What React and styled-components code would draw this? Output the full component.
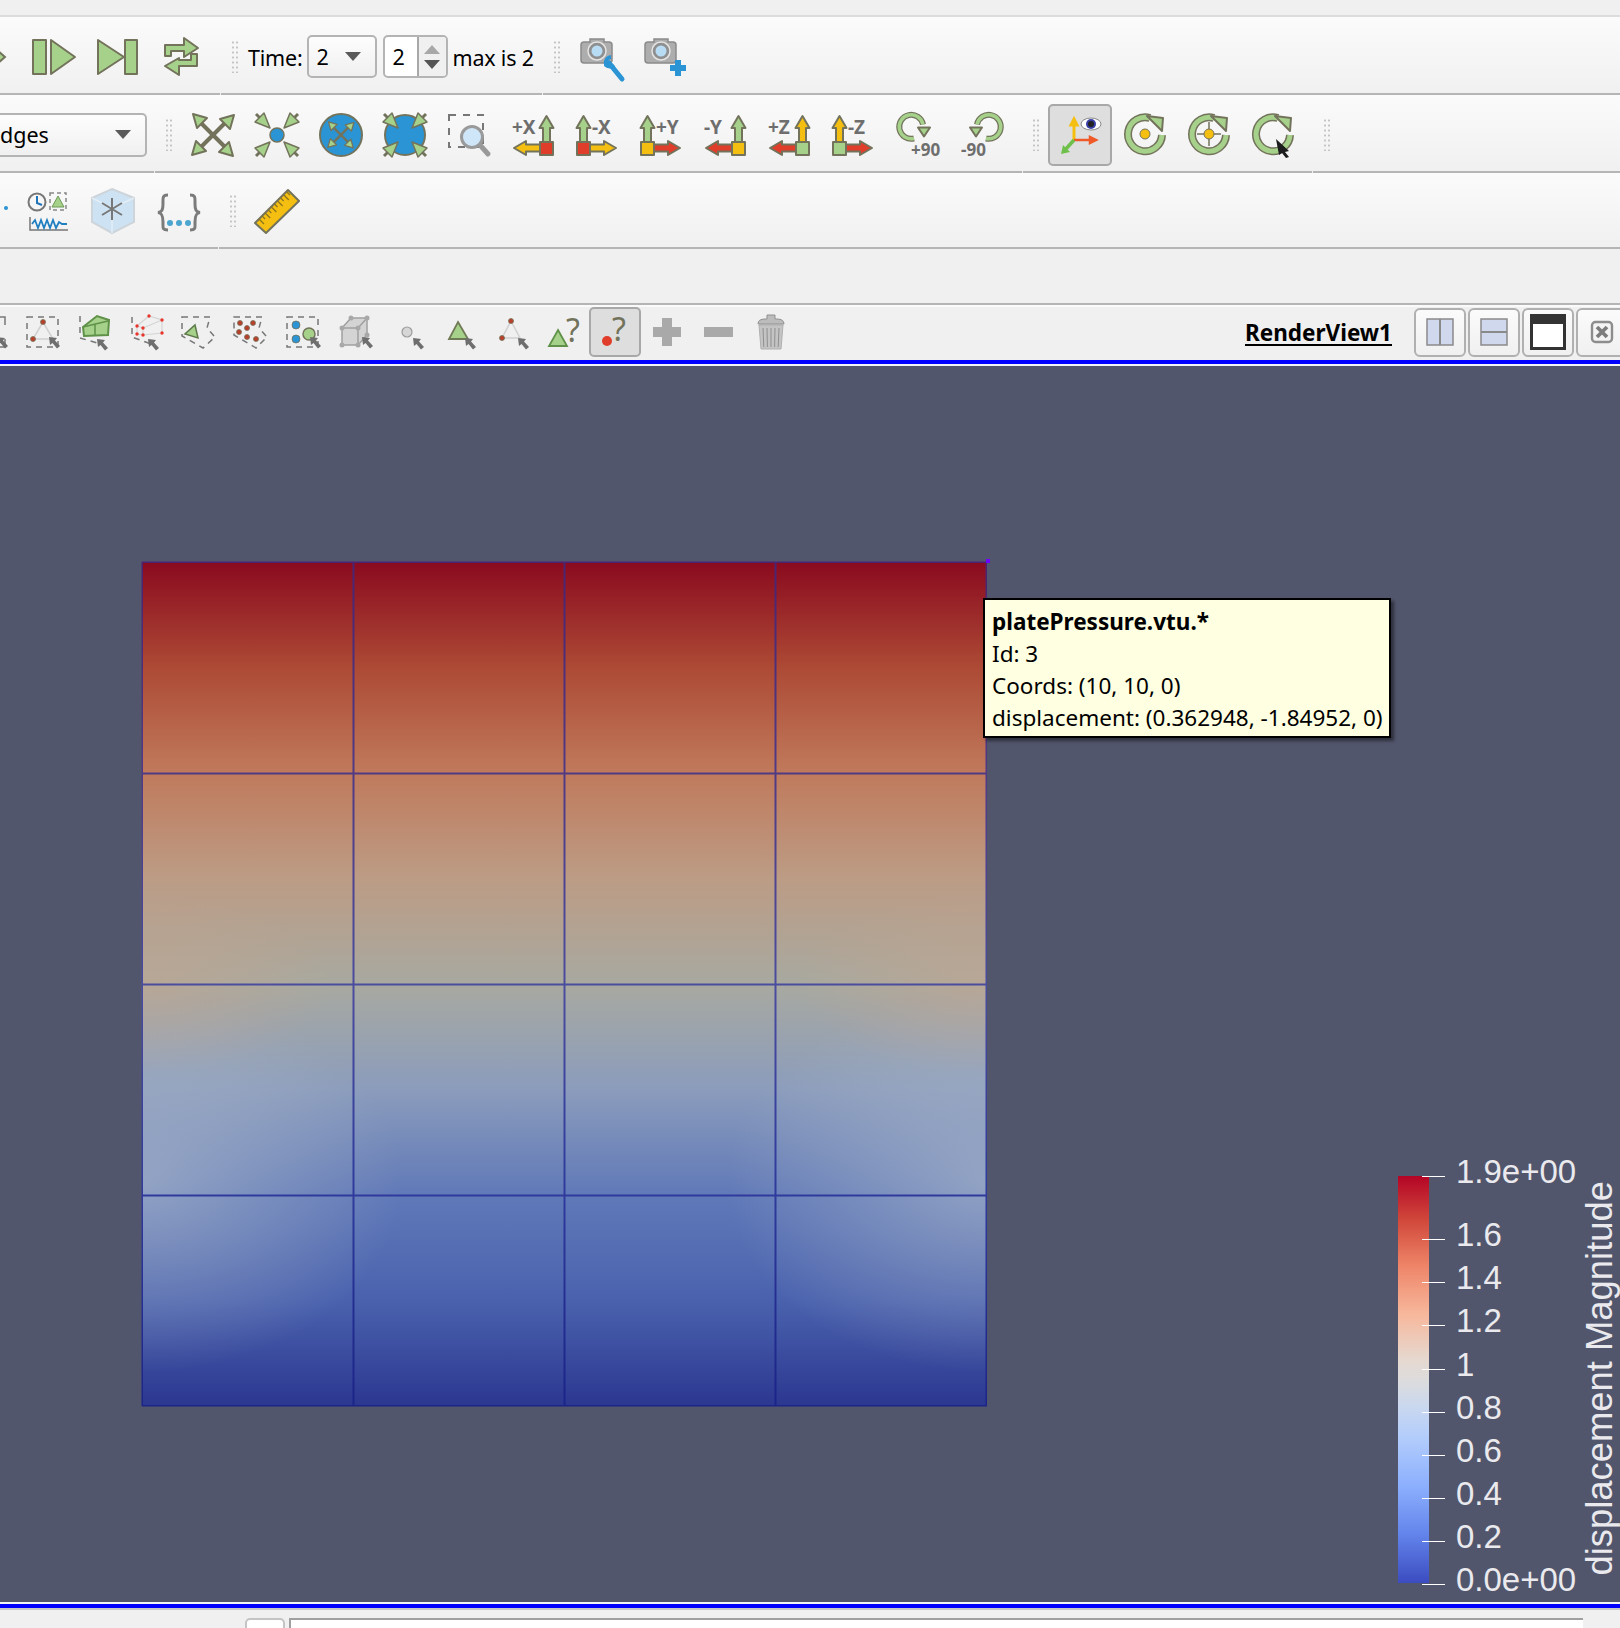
import React from 'react';
import styled, { createGlobalStyle } from 'styled-components';

const O = '#73735c';
const G = '#a6d18a';
const B = '#2a94d4';
const R = '#e03d2b';
const Y = '#f5bf11';
const S = '#6e6e6e';
const UI_FONT = '"Noto Sans", "Open Sans", sans-serif';

const GlobalStyle = createGlobalStyle`
  html, body { margin: 0; padding: 0; background: #f0f0f0; }
  body { font-family: ${UI_FONT}; color: #000; }
`;

const Page = styled.div`
  width: 1620px;
  height: 1628px;
  overflow: hidden;
  display: flex;
  flex-direction: column;
  background: #f0f0f0;
`;

const TopStrip = styled.div`
  height: 15px;
  flex: none;
  border-bottom: 2px solid #dcdcdc;
`;

const ToolRow = styled.div`
  height: ${(p) => p.$h}px;
  flex: none;
  display: flex;
  gap: 1px;
  background: linear-gradient(#fbfbfb, #f0f0f0);
`;

const Segment = styled.div`
  flex: ${(p) => (p.$w ? `0 0 ${p.$w}px` : '1 1 auto')};
  display: flex;
  align-items: center;
  padding: ${(p) => p.$top || 0}px 0 0 ${(p) => p.$pad || 0}px;
  border-bottom: 2px solid #b5b5b5;
  box-sizing: border-box;
  min-width: 0;
`;

const Grip = styled.div`
  flex: none;
  width: 8px;
  height: 33px;
  margin-right: ${(p) => p.$gap || 8}px;
  background-image: radial-gradient(circle, #c4c4c4 1px, transparent 1.2px);
  background-size: 4px 5px;
`;

const IconButton = styled.div`
  flex: none;
  width: ${(p) => p.$w || 64}px;
  height: ${(p) => p.$h || 62}px;
  margin-left: ${(p) => p.$shift || 0}px;
  display: flex;
  align-items: center;
  justify-content: center;
  box-sizing: border-box;
  border-radius: 5px;
  border: 2px solid ${(p) => (p.$pressed ? '#a8a8a8' : 'transparent')};
  background: ${(p) => (p.$pressed ? '#dedede' : 'transparent')};
`;

const IconSvg = styled.svg`
  display: block;
  flex: none;
  overflow: visible;
  text {
    font-family: ${UI_FONT};
    font-weight: 700;
    fill: ${S};
  }
`;

const Caption = styled.span`
  flex: none;
  font-size: 21.5px;
  letter-spacing: -0.2px;
  line-height: 30px;
  padding-top: 3px;
  margin: ${(p) => p.$margin || 0};
`;

const Combo = styled.div`
  flex: none;
  box-sizing: border-box;
  width: ${(p) => p.$w}px;
  height: ${(p) => p.$h}px;
  margin-left: ${(p) => p.$left || 0}px;
  padding: 0 14px 0 ${(p) => p.$pad}px;
  display: flex;
  align-items: center;
  justify-content: space-between;
  border: 2px solid #b4b4b4;
  border-radius: 5px;
  background: linear-gradient(#fdfdfd, #f0f0f0);
  font-size: 21.5px;
`;

const ComboArrow = styled.span`
  width: 0;
  height: 0;
  border-left: 8px solid transparent;
  border-right: 8px solid transparent;
  border-top: 9px solid #5a5a5a;
`;

const Spin = styled.div`
  flex: none;
  box-sizing: border-box;
  width: 65px;
  height: 43px;
  margin-left: 6px;
  display: flex;
  border: 2px solid #b4b4b4;
  border-radius: 5px;
  background: #fff;
  font-size: 21.5px;
  overflow: hidden;
`;

const SpinValue = styled.div`
  flex: 1;
  padding-left: 8px;
  display: flex;
  align-items: center;
`;

const SpinArrows = styled.div`
  flex: 0 0 27px;
  background: #f0f0f0;
  border-left: 2px solid #a8a8a8;
  display: flex;
  flex-direction: column;
  align-items: center;
  justify-content: center;
  gap: 6px;
`;

const SpinArrow = styled.span`
  width: 0;
  height: 0;
  border-left: 8px solid transparent;
  border-right: 8px solid transparent;
  border-${(p) => (p.$up ? 'bottom' : 'top')}: 9px solid ${(p) => (p.$up ? '#a8a8a8' : '#555')};
`;

const BlankRow = styled.div`
  height: 54px;
  flex: none;
  border-bottom: 2px solid #b5b5b5;
`;

const SelectionBar = styled.div`
  width: 1628px;
  height: 55px;
  flex: none;
  box-sizing: border-box;
  border-top: 2px solid #fafafa;
  padding-bottom: 3px;
  display: flex;
  align-items: center;
  background: #f0f0f0;
`;

const ViewName = styled.span`
  margin-left: auto;
  margin-right: 22px;
  font-size: 22.5px;
  font-weight: 700;
  text-decoration: underline;
  text-decoration-thickness: 2px;
  text-underline-offset: 3px;
`;

const ViewButtons = styled.div`
  display: flex;
  gap: 2px;
`;

const ViewButton = styled.div`
  width: 52px;
  height: 49px;
  box-sizing: border-box;
  border: 2px solid #b0b0b0;
  border-radius: 6px;
  background: linear-gradient(#fbfbfb, #f0f0f0);
  display: flex;
  align-items: center;
  justify-content: center;
`;

const BlueLine = styled.div`
  height: 4px;
  flex: none;
  background: #0000ff;
`;

const WhiteLine = styled.div`
  height: 2px;
  flex: none;
  background: #f4f4f4;
`;

const Viewport = styled.div`
  position: relative;
  height: 1236px;
  flex: none;
  box-sizing: border-box;
  padding: 196px 0 0 142px;
  background: #52566c;
  overflow: hidden;
`;

const Tooltip = styled.div`
  position: absolute;
  left: 983px;
  top: 232px;
  width: 408px;
  height: 140px;
  box-sizing: border-box;
  padding: 6px 0 0 7px;
  border: 2px solid #000;
  background: #ffffe1;
  box-shadow: 3px 3px 3px rgba(0, 0, 0, 0.45);
  font-size: 22.5px;
  line-height: 32px;
  white-space: nowrap;
`;

const TooltipTitle = styled.div`
  font-weight: 700;
`;

const Legend = styled.div`
  position: absolute;
  left: 1398px;
  top: 810px;
  display: flex;
  align-items: flex-start;
  color: #eaeaee;
  font-family: "Liberation Sans", Arial, sans-serif;
`;

const ColorBar = styled.div`
  width: 31px;
  height: 407px;
  margin-right: -7px;
  background: linear-gradient(
    #b40426 0%,
    #d1493b 11%,
    #ee8468 22%,
    #f7b89c 34%,
    #e6d8cf 45%,
    #dddcdc 50%,
    #c9d7f0 57%,
    #b3cdfb 64%,
    #8db0fe 76%,
    #6384eb 88%,
    #3b4cc0 100%
  );
`;

const LegendScale = styled.div`
  position: relative;
  width: 158px;
  display: flex;
  flex-direction: column;
`;

const LegendRow = styled.div`
  height: 1px;
  margin-top: ${(p) => p.$gap}px;
  display: flex;
  align-items: center;
`;

const Tick = styled.span`
  flex: none;
  width: 23px;
  height: 1px;
  background: #fff;
`;

const TickLabel = styled.span`
  margin: -10px 0 0 11px;
  font-size: 33px;
  line-height: 33px;
  white-space: nowrap;
`;

const LegendTitle = styled.div`
  writing-mode: vertical-rl;
  transform: rotate(180deg);
  margin-top: 5px;
  font-size: 36.4px;
  line-height: 40px;
  white-space: nowrap;
`;

const StatusBar = styled.div`
  flex: 1;
  border-top: 2px solid #c8c8c8;
  display: flex;
  align-items: flex-start;
  gap: 4px;
  padding: 8px 0 0 245px;
`;

const StatusButton = styled.div`
  width: 40px;
  height: 30px;
  box-sizing: border-box;
  border: 2px solid #c4c4c4;
  border-radius: 5px;
  background: #fff;
`;

const StatusField = styled.div`
  width: 1294px;
  height: 30px;
  box-sizing: border-box;
  border-top: 2px solid #a0a0a0;
  border-left: 2px solid #a0a0a0;
  background: #fff;
`;

const Icon = ({ s = 48, w, children }) => (
  <IconSvg width={w || s} height={s} viewBox={`0 0 ${w || s} ${s}`}>
    {children}
  </IconSvg>
);

const lineProps = { stroke: O, strokeWidth: 2, strokeLinejoin: 'round' };
const QUARTERS = [0, 90, 180, 270];

const Play = () => (
  <Icon>
    <rect x="4" y="7" width="13" height="34" fill={G} {...lineProps} />
    <polygon points="22,7 46,24 22,41" fill={G} {...lineProps} />
  </Icon>
);

const NextFrame = () => (
  <Icon>
    <polygon points="5,7 31,24 5,41" fill={G} {...lineProps} />
    <rect x="32" y="7" width="12" height="34" fill={G} {...lineProps} />
  </Icon>
);

const Loop = () => (
  <Icon>
    <path d="M8 23V12H27V5L41 15L27 24V18H14V23Z" fill={G} {...lineProps} />
    <path d="M40 21V33H22V42L8 33L22 25V27H34V21Z" fill={G} {...lineProps} />
  </Icon>
);

const CameraBody = () => (
  <>
    <path d="M4 12Q4 9 7 9H13V6H27V9H32Q35 9 35 12V27Q35 30 32 30H7Q4 30 4 27Z" fill="#adadad" stroke="#8b8b8b" strokeWidth="1.5" />
    <circle cx="20" cy="18" r="9" fill="#8f8f8f" stroke="#e4e4e4" strokeWidth="1.5" />
    <circle cx="20" cy="18" r="5.5" fill="#b9dcf5" />
  </>
);

const CameraTool = () => (
  <Icon>
    <CameraBody />
    <path d="M32 30L45 46" stroke={B} strokeWidth="5" strokeLinecap="round" />
    <path d="M34 24A6 6 0 0 0 29 32A6 6 0 0 0 37 32" fill="none" stroke={B} strokeWidth="4" />
  </Icon>
);

const CameraPlus = () => (
  <Icon>
    <CameraBody />
    <path d="M37 27V43M29 35H45" stroke={B} strokeWidth="6" />
  </Icon>
);

const OutwardHead = () => (
  <>
    <path d="M24 24L10 10" stroke={O} strokeWidth="4" />
    <polygon points="4,3 18,7 8,17" fill={G} {...lineProps} />
  </>
);

const OutwardArrows = () =>
  QUARTERS.map((a) => (
    <g key={a} transform={`rotate(${a} 24 24)`}>
      <OutwardHead />
    </g>
  ));

const InwardHead = ({ tip = 17 }) => (
  <>
    <path d={`M${tip - 10} ${tip - 10}L3 3`} stroke={O} strokeWidth="3" />
    <polygon points={`${tip},${tip} ${tip - 15},${tip - 6} ${tip - 6},${tip - 15}`} fill={G} stroke={O} strokeWidth="1.5" strokeLinejoin="round" />
  </>
);

const InwardArrows = ({ tip }) =>
  QUARTERS.map((a) => (
    <g key={a} transform={`rotate(${a} 24 24)`}>
      <InwardHead tip={tip} />
    </g>
  ));

const ResetView = () => (
  <Icon>
    <OutwardArrows />
  </Icon>
);

const ZoomData = () => (
  <Icon>
    <InwardArrows tip={17} />
    <circle cx="24" cy="24" r="7" fill={B} stroke={O} strokeWidth="1.5" />
  </Icon>
);

const ZoomClosest = () => (
  <Icon>
    <circle cx="24" cy="24" r="21" fill={B} stroke={O} strokeWidth="2" />
    <g transform="translate(9 9) scale(.62)">
      <OutwardArrows />
    </g>
  </Icon>
);

const ZoomFit = () => (
  <Icon>
    <circle cx="24" cy="24" r="20" fill={B} stroke={O} strokeWidth="2" />
    <InwardArrows tip={17} />
  </Icon>
);

const ZoomBox = () => (
  <Icon>
    <rect x="4" y="4" width="34" height="32" fill="none" stroke="#777" strokeWidth="2" strokeDasharray="7 7" />
    <path d="M35 34L43 43" stroke="#999" strokeWidth="5" strokeLinecap="round" />
    <circle cx="27" cy="26" r="10.5" fill="#cfe6f8" stroke="#9a9a9a" strokeWidth="3" />
  </Icon>
);

const Arrow = ({ x, y, dir, fill }) => {
  // shaft base at x,y going dir, 26px long
  const rot = { up: 0, left: -90, right: 90 }[dir];
  return (
    <path
      transform={`translate(${x} ${y}) rotate(${rot})`}
      d="M-3.5 0V-14H-7L0 -26L7 -14H3.5V0Z"
      fill={fill}
      {...lineProps}
    />
  );
};

const AxisView = ({ label, side, square, up, across }) => {
  const right = side === 'right';
  const sx = right ? 31 : 4;
  const cx = sx + 6.5;
  return (
    <Icon>
      <Arrow x={cx} y={31} dir="up" fill={up} />
      <Arrow x={right ? sx : sx + 13} y={37} dir={right ? 'left' : 'right'} fill={across} />
      <rect x={sx} y="31" width="13" height="13" fill={square} {...lineProps} />
      <text x={right ? 3 : 19} y="23" fontSize="19">{label}</text>
    </Icon>
  );
};

const Quarter = ({ label, back }) => (
  <Icon>
    <g transform={back ? 'translate(50 -1.5) scale(-1 1)' : 'translate(0 -1.5)'}>
      <path d="M21 29A12 12 0 1 1 30 15" fill="none" stroke={O} strokeWidth="6" />
      <path d="M21 29A12 12 0 1 1 30 15" fill="none" stroke={G} strokeWidth="3.5" />
      <polygon points="25,18 37,18 31,27" fill={G} {...lineProps} />
    </g>
    <text x={back ? 4 : 18} y="45" fontSize="17">{label}</text>
  </Icon>
);

const AxesEye = () => (
  <Icon>
    <path d="M18 29V14H15L18 8L21 14H18" fill={Y} stroke={Y} strokeWidth="3" />
    <path d="M18 29H34V26L40 29L34 32V29" fill="#f05a28" stroke="#f05a28" strokeWidth="2.5" />
    <path d="M18 29L9 39" stroke="#6fc04b" strokeWidth="3.5" />
    <polygon points="5,43 7,34 14,41" fill="#6fc04b" />
    <ellipse cx="35" cy="13" rx="10" ry="6" fill="#fff" stroke="#8a8a8a" />
    <circle cx="35" cy="13" r="5" fill="#3a3fa8" />
    <circle cx="35" cy="13" r="3" fill="#222" />
  </Icon>
);

const Ring = ({ children }) => (
  <Icon>
    <g transform="translate(0 -1)">
      <path d="M42 25A17 17 0 1 1 30 8" fill="none" stroke={O} strokeWidth="8" />
      <path d="M42 25A17 17 0 1 1 30 8" fill="none" stroke={G} strokeWidth="5" />
      <polygon points="27,6 43,8 42,21" fill={G} {...lineProps} />
      {children}
    </g>
  </Icon>
);

const TimeInspector = () => (
  <Icon>
    <circle cx="13" cy="16" r="8.5" fill="#f6f6f6" stroke="#777" strokeWidth="2" />
    <path d="M13 10V17L18 19" fill="none" stroke="#2274b8" strokeWidth="2" />
    <rect x="26" y="7" width="16" height="17" fill="none" stroke="#888" strokeWidth="1.5" strokeDasharray="4 3" />
    <polygon points="34,10 40,21 28,21" fill={G} stroke="#6a9a55" />
    <path d="M6 31V44H44" fill="none" stroke="#777" strokeWidth="1.5" />
    <path d="M8 38L11 34L14 42L17 34L20 42L23 34L26 42L29 34L32 42L35 36L38 38H43" fill="none" stroke="#1f7fc0" strokeWidth="1.8" />
  </Icon>
);

const ColorCube = () => (
  <Icon>
    <polygon points="24,3 46,12 46,36 24,47 4,36 4,12" fill="#cde3f4" stroke="#cdd4da" strokeWidth="2" />
    <path d="M4 12L24 22L46 12M24 22V47" fill="none" stroke="#e3edf5" strokeWidth="1.5" />
    <path d="M24 12V34M14 17L34 29M34 17L14 29" stroke="#777" strokeWidth="2" />
  </Icon>
);

const Braces = () => (
  <Icon>
    <g fill="none" stroke="#7b7b7b" strokeWidth="3">
      <path d="M13 9C7 9 8 12 8 18C8 24 7 26 3 26.5C7 27 8 30 8 36C8 42 7 44 13 44" />
      <path d="M35 9C41 9 40 12 40 18C40 24 41 26 45 26.5C41 27 40 30 40 36C40 42 41 44 35 44" />
    </g>
    {[15, 24, 33].map((x) => (
      <circle key={x} cx={x} cy="37" r="3" fill="#4ca5cf" />
    ))}
  </Icon>
);

const Ruler = () => (
  <Icon>
    <polygon points="3,37 36,4 47,15 14,47" fill={Y} {...lineProps} />
    {[0, 1, 2, 3, 4, 5, 6, 7, 8, 9].map((i) => {
      const x = 7 + i * 3.1;
      const y = 33 - i * 3;
      const len = i % 2 ? 3 : 5;
      return <path key={i} d={`M${x} ${y}l${len} ${len}`} stroke="#8a7420" strokeWidth="1.2" />;
    })}
  </Icon>
);

const Pick = ({ x, y }) => (
  <path
    transform={`translate(${x} ${y})`}
    d="M0 0L8 1L6 3.5L11 9L8 11.5L3.5 6L1 8Z"
    fill={S}
  />
);

const Dash = ({ d }) => (
  <path d={d} fill="none" stroke="#777" strokeWidth="1.5" strokeDasharray="6 5" />
);

const Dot = ({ x, y, r = 2.5, fill = '#b8402a' }) => (
  <circle cx={x} cy={y} r={r} fill={fill} stroke={O} strokeWidth=".8" />
);

const EdgeStub = () => (
  <Icon s={40} w={17}>
    <path d="M0 5H5V13M0 35H5V27" fill="none" stroke="#777" strokeWidth="1.5" />
    <Pick x={-3} y={25} />
  </Icon>
);

const SurfacePoints = () => (
  <Icon s={40}>
    <rect x="4" y="5" width="31" height="30" fill="none" stroke="#777" strokeWidth="1.5" strokeDasharray="6 5" />
    <path d="M20 10L10 27H30Z" fill="none" stroke="#d0d0d0" strokeWidth="1.5" />
    <Dot x={20} y={10} />
    <Dot x={10} y={27} />
    <Pick x={26} y={25} />
  </Icon>
);

const FrustumCells = () => (
  <Icon s={40}>
    <Dash d="M5 4V26L26 32" />
    <polygon points="8,15 22,4 34,8 33,23 9,24" fill={G} stroke="#5f9148" strokeWidth="2" />
    <path d="M8 15L33 9M20 12V24" fill="none" stroke="#5f9148" strokeWidth="1.5" />
    <Pick x={22} y={27} />
  </Icon>
);

const FrustumPoints = () => (
  <Icon s={40}>
    <Dash d="M5 5V25L24 32" />
    <path d="M10 14L22 4L35 8V21L16 23L10 22ZM16 16L35 8M16 16V23M10 14L16 16" fill="none" stroke="#d4d4d4" strokeWidth="1.2" />
    {[[22, 4], [35, 8], [35, 21], [10, 14], [16, 16], [10, 22], [16, 23]].map(([x, y]) => (
      <circle key={`${x}-${y}`} cx={x} cy={y} r="1.7" fill="#e8352b" />
    ))}
    <Pick x={21} y={27} />
  </Icon>
);

const PolygonCells = () => (
  <Icon s={40}>
    <Dash d="M3 5L31 5L28 16L36 25L24 36L3 24Z" />
    <polygon points="16,13 19,26 6,22" fill={G} stroke="#5f7a4a" strokeWidth="1.5" />
  </Icon>
);

const PolygonPoints = () => (
  <Icon s={40}>
    <Dash d="M3 5L31 5L28 16L36 25L25 36L3 23Z" />
    {[[9, 11], [22, 11], [16, 16], [8, 20], [16, 25], [25, 27]].map(([x, y]) => (
      <Dot key={`${x}-${y}`} x={x} y={y} />
    ))}
  </Icon>
);

const BlockSelect = () => (
  <Icon s={40}>
    <rect x="4" y="5" width="31" height="30" fill="none" stroke="#777" strokeWidth="1.5" strokeDasharray="6 5" />
    <Dot x={13} y={13} r={4} fill={B} />
    <Dot x={13} y={27} r={4} fill={B} />
    <circle cx="26" cy="22" r="6" fill={G} stroke={O} strokeWidth="1.5" />
    <Pick x={27} y={25} />
  </Icon>
);

const CubeSelect = () => (
  <Icon s={40}>
    <path d="M7 16L16 6H32V23L23 33H7Z" fill="#d4d4d4" stroke="#a0a0a0" strokeWidth="1.5" />
    <path d="M7 16H23V33M23 16L32 6" fill="none" stroke="#a0a0a0" strokeWidth="1.5" />
    {[[7, 16], [23, 16], [7, 33], [23, 33], [16, 6], [32, 6], [32, 23]].map(([x, y]) => (
      <circle key={`${x}-${y}`} cx={x} cy={y} r="2.5" fill="#a8a8a8" />
    ))}
    <Pick x={27} y={25} />
  </Icon>
);

const PointPick = () => (
  <Icon s={40}>
    <circle cx="20" cy="20" r="5" fill="#d6d6d6" stroke="#9c9c9c" strokeWidth="1.2" />
    <Pick x={26} y={26} />
  </Icon>
);

const TrianglePick = () => (
  <Icon s={40}>
    <polygon points="19,10 29,27 10,27" fill={G} stroke="#6f7a55" strokeWidth="1.8" />
    <Pick x={26} y={26} />
  </Icon>
);

const TriangleDots = () => (
  <Icon s={40}>
    <path d="M20 9L11 26H29Z" fill="none" stroke="#d0d0d0" strokeWidth="1.5" />
    <Dot x={20} y={9} />
    <Dot x={11} y={26} />
    <Pick x={27} y={26} />
  </Icon>
);

const TriangleQuery = () => (
  <Icon s={40}>
    <polygon points="15,18 24,34 6,34" fill={G} stroke="#5f9148" strokeWidth="1.8" />
    <text x="23" y="30" fontSize="32" style={{ fill: O, fontWeight: 400 }}>?</text>
  </Icon>
);

const DotQuery = () => (
  <Icon s={40}>
    <circle cx="12" cy="29" r="5" fill={R} />
    <text x="17" y="29" fontSize="32" style={{ fill: O, fontWeight: 400 }}>?</text>
  </Icon>
);

const PlusGrey = () => (
  <Icon s={40}>
    <path d="M20 6V34M6 20H34" stroke="#a9a9a9" strokeWidth="10" />
  </Icon>
);

const MinusGrey = () => (
  <Icon s={40}>
    <rect x="5" y="15" width="29" height="10" fill="#a9a9a9" />
  </Icon>
);

const Trash = () => (
  <Icon s={40}>
    <path d="M8 13H32L30 37H10Z" fill="#c4c4c4" stroke="#b0b0b0" />
    {[12, 16, 20, 24, 28].map((x) => (
      <path key={x} d={`M${x} 16L${x + (20 - x) * 0.1} 35`} stroke="#8f8f8f" />
    ))}
    <path d="M7 12Q7 7 14 7H16V3H24V7H26Q33 7 33 12Z" fill="#bcbcbc" stroke="#909090" />
  </Icon>
);

const SplitIcon = ({ across }) => (
  <Icon s={28}>
    <rect x="1" y="1" width="26" height="26" fill="#d0d8ee" stroke="#8a8a8a" strokeWidth="1.5" />
    <path d={across ? 'M1 14H27' : 'M14 1V27'} stroke="#8a8a8a" strokeWidth="2" />
  </Icon>
);

const MaxIcon = () => (
  <Icon s={36}>
    <rect x="1.5" y="1.5" width="33" height="33" fill="#fff" stroke="#333" strokeWidth="3" />
    <rect x="0" y="0" width="36" height="10" fill="#333" />
  </Icon>
);

const CloseIcon = () => (
  <Icon s={24}>
    <rect x="2" y="2" width="20" height="20" rx="3.5" fill="#f4f4f4" stroke="#8d8d8d" strokeWidth="2.4" />
    <path d="M7 7L17 17M17 7L7 17" stroke="#7d7d7d" strokeWidth="3.8" />
  </Icon>
);

const MESH_STOPS = [
  [0, '#8a0a1f'],
  [0.125, '#ad4a35'],
  [0.25, '#c07a5c'],
  [0.375, '#bc9c85'],
  [0.5, '#a8a9a0'],
  [0.625, '#8b9cbc'],
  [0.75, '#6079b8'],
  [0.875, '#4a62ae'],
  [1, '#2c3790'],
];

const MESH_LINES = [0, 211, 422, 633, 844];

const Mesh = () => (
  <IconSvg width="845" height="844" viewBox="0 0 845 844">
    <defs>
      <linearGradient id="meshFill" x1="0" y1="0" x2="0" y2="1">
        {MESH_STOPS.map(([o, c]) => (
          <stop key={o} offset={o} stopColor={c} />
        ))}
      </linearGradient>
      <linearGradient id="meshLine" gradientUnits="userSpaceOnUse" x1="0" y1="0" x2="0" y2="844">
        <stop offset="0" stopColor="#4a2470" />
        <stop offset=".25" stopColor="#513a84" />
        <stop offset=".5" stopColor="#4a4c9e" />
        <stop offset=".75" stopColor="#2f3a9c" />
        <stop offset="1" stopColor="#1b2488" />
      </linearGradient>
      <radialGradient id="coolEdge">
        <stop offset="0" stopColor="#b0bccb" stopOpacity=".6" />
        <stop offset="1" stopColor="#b0bccb" stopOpacity="0" />
      </radialGradient>
      <radialGradient id="warmEdge">
        <stop offset="0" stopColor="#c8a58c" stopOpacity=".5" />
        <stop offset="1" stopColor="#c8a58c" stopOpacity="0" />
      </radialGradient>
      <clipPath id="meshClip">
        <rect width="845" height="844" />
      </clipPath>
    </defs>
    <rect width="845" height="844" fill="url(#meshFill)" />
    <g clipPath="url(#meshClip)">
      {[0, 845].map((x) => (
        <g key={x}>
          <ellipse cx={x} cy="620" rx="260" ry="190" fill="url(#coolEdge)" />
          <ellipse cx={x} cy="421" rx="190" ry="90" fill="url(#warmEdge)" />
        </g>
      ))}
    </g>
    {MESH_LINES.map((x) => (
      <rect key={x} x={x === 844 ? 843.5 : x - 0.5} y="0" width={x === 0 || x === 844 ? 1.5 : 2} height="844" fill="url(#meshLine)" />
    ))}
    {MESH_LINES.map((y) => (
      <rect key={y} x="0" y={y === 844 ? 843 : y - 0.5} width="845" height={y === 0 || y === 844 ? 1.5 : 2} fill="url(#meshLine)" />
    ))}
    <rect x="844" y="-3" width="4" height="4" fill="#7000ff" />
  </IconSvg>
);

const TICKS = [
  ['1.9e+00', 0],
  ['1.6', 62],
  ['1.4', 42],
  ['1.2', 42],
  ['1', 43],
  ['0.8', 42],
  ['0.6', 42],
  ['0.4', 42],
  ['0.2', 42],
  ['0.0e+00', 42],
];

const ScalarBar = () => (
  <Legend>
    <ColorBar />
    <LegendScale>
      {TICKS.map(([label, gap]) => (
        <LegendRow key={label} $gap={gap}>
          <Tick />
          <TickLabel>{label}</TickLabel>
        </LegendRow>
      ))}
    </LegendScale>
    <LegendTitle>displacement Magnitude</LegendTitle>
  </Legend>
);

export default function App() {
  return (
    <Page>
      <GlobalStyle />
      <TopStrip />

      <ToolRow $h={78}>
        <Segment $w={220} $top={3}>
          <Icon s={40} w={6}>
            <polygon points="-4,12 5,20 -4,28" fill={G} stroke={O} strokeWidth="2" />
          </Icon>
          <IconButton $w={15} />
          <IconButton><Play /></IconButton>
          <IconButton><NextFrame /></IconButton>
          <IconButton><Loop /></IconButton>
        </Segment>
        <Segment $w={321} $pad={10} $top={3}>
          <Grip $gap={9} />
          <Caption>Time:</Caption>
          <Combo $w={70} $h={43} $left={4} $pad={8}>
            2
            <ComboArrow />
          </Combo>
          <Spin>
            <SpinValue>2</SpinValue>
            <SpinArrows>
              <SpinArrow $up />
              <SpinArrow />
            </SpinArrows>
          </Spin>
          <Caption $margin="0 0 0 5px">max is 2</Caption>
        </Segment>
        <Segment $pad={10} $top={3}>
          <Grip $gap={8} />
          <IconButton><CameraTool /></IconButton>
          <IconButton><CameraPlus /></IconButton>
        </Segment>
      </ToolRow>

      <ToolRow $h={78}>
        <Segment $w={154} $top={3}>
          <Combo $w={159} $h={44} $left={-12} $pad={10}>
            dges
            <ComboArrow />
          </Combo>
        </Segment>
        <Segment $w={867} $pad={10} $top={3}>
          <Grip $gap={8} />
          <IconButton><ResetView /></IconButton>
          <IconButton><ZoomData /></IconButton>
          <IconButton><ZoomClosest /></IconButton>
          <IconButton><ZoomFit /></IconButton>
          <IconButton><ZoomBox /></IconButton>
          <IconButton><AxisView label="+X" side="right" square={R} up={G} across={Y} /></IconButton>
          <IconButton><AxisView label="-X" side="left" square={R} up={G} across={Y} /></IconButton>
          <IconButton><AxisView label="+Y" side="left" square={Y} up={G} across={R} /></IconButton>
          <IconButton><AxisView label="-Y" side="right" square={Y} up={G} across={R} /></IconButton>
          <IconButton><AxisView label="+Z" side="right" square={G} up={Y} across={R} /></IconButton>
          <IconButton><AxisView label="-Z" side="left" square={G} up={Y} across={R} /></IconButton>
          <IconButton><Quarter label="+90" /></IconButton>
          <IconButton><Quarter label="-90" back /></IconButton>
        </Segment>
        <Segment $w={289} $pad={9} $top={3}>
          <Grip $gap={8} />
          <IconButton $pressed><AxesEye /></IconButton>
          <IconButton>
            <Ring>
              <circle cx="25" cy="24" r="5" fill={Y} stroke={O} strokeWidth="1" />
            </Ring>
          </IconButton>
          <IconButton>
            <Ring>
              <path d="M13 24H37M25 12V36" stroke={O} strokeWidth="1.5" />
              <circle cx="25" cy="24" r="5" fill={Y} stroke={O} strokeWidth="1" />
            </Ring>
          </IconButton>
          <IconButton>
            <Ring>
              <path d="M28 29L41 41L37 42L41 47L38 48L34 43L31 45Z" fill="#1c1c1c" />
            </Ring>
          </IconButton>
        </Segment>
        <Segment $pad={10} $top={3}>
          <Grip />
        </Segment>
      </ToolRow>

      <ToolRow $h={76}>
        <Segment $w={218}>
          <IconButton $w={16}>
            <Icon s={40} w={4}>
              <circle cx="0" cy="18" r="2" fill={B} />
            </Icon>
          </IconButton>
          <IconButton><TimeInspector /></IconButton>
          <IconButton><ColorCube /></IconButton>
          <IconButton $shift={3}><Braces /></IconButton>
        </Segment>
        <Segment $pad={10}>
          <Grip $gap={7} />
          <IconButton><Ruler /></IconButton>
        </Segment>
      </ToolRow>

      <BlankRow />

      <SelectionBar>
        <EdgeStub />
        <IconButton $w={52} $h={50}><SurfacePoints /></IconButton>
        <IconButton $w={52} $h={50}><FrustumCells /></IconButton>
        <IconButton $w={52} $h={50}><FrustumPoints /></IconButton>
        <IconButton $w={52} $h={50}><PolygonCells /></IconButton>
        <IconButton $w={52} $h={50}><PolygonPoints /></IconButton>
        <IconButton $w={52} $h={50}><BlockSelect /></IconButton>
        <IconButton $w={52} $h={50}><CubeSelect /></IconButton>
        <IconButton $w={52} $h={50}><PointPick /></IconButton>
        <IconButton $w={52} $h={50}><TrianglePick /></IconButton>
        <IconButton $w={52} $h={50}><TriangleDots /></IconButton>
        <IconButton $w={52} $h={50}><TriangleQuery /></IconButton>
        <IconButton $w={52} $h={50} $pressed><DotQuery /></IconButton>
        <IconButton $w={52} $h={50}><PlusGrey /></IconButton>
        <IconButton $w={52} $h={50}><MinusGrey /></IconButton>
        <IconButton $w={52} $h={50}><Trash /></IconButton>
        <ViewName>RenderView1</ViewName>
        <ViewButtons>
          <ViewButton><SplitIcon /></ViewButton>
          <ViewButton><SplitIcon across /></ViewButton>
          <ViewButton><MaxIcon /></ViewButton>
          <ViewButton><CloseIcon /></ViewButton>
        </ViewButtons>
      </SelectionBar>

      <BlueLine />
      <WhiteLine />

      <Viewport>
        <Mesh />
        <Tooltip>
          <TooltipTitle>platePressure.vtu.*</TooltipTitle>
          <div>Id: 3</div>
          <div>Coords: (10, 10, 0)</div>
          <div>displacement: (0.362948, -1.84952, 0)</div>
        </Tooltip>
        <ScalarBar />
      </Viewport>

      <WhiteLine />
      <BlueLine />

      <StatusBar>
        <StatusButton />
        <StatusField />
      </StatusBar>
    </Page>
  );
}
